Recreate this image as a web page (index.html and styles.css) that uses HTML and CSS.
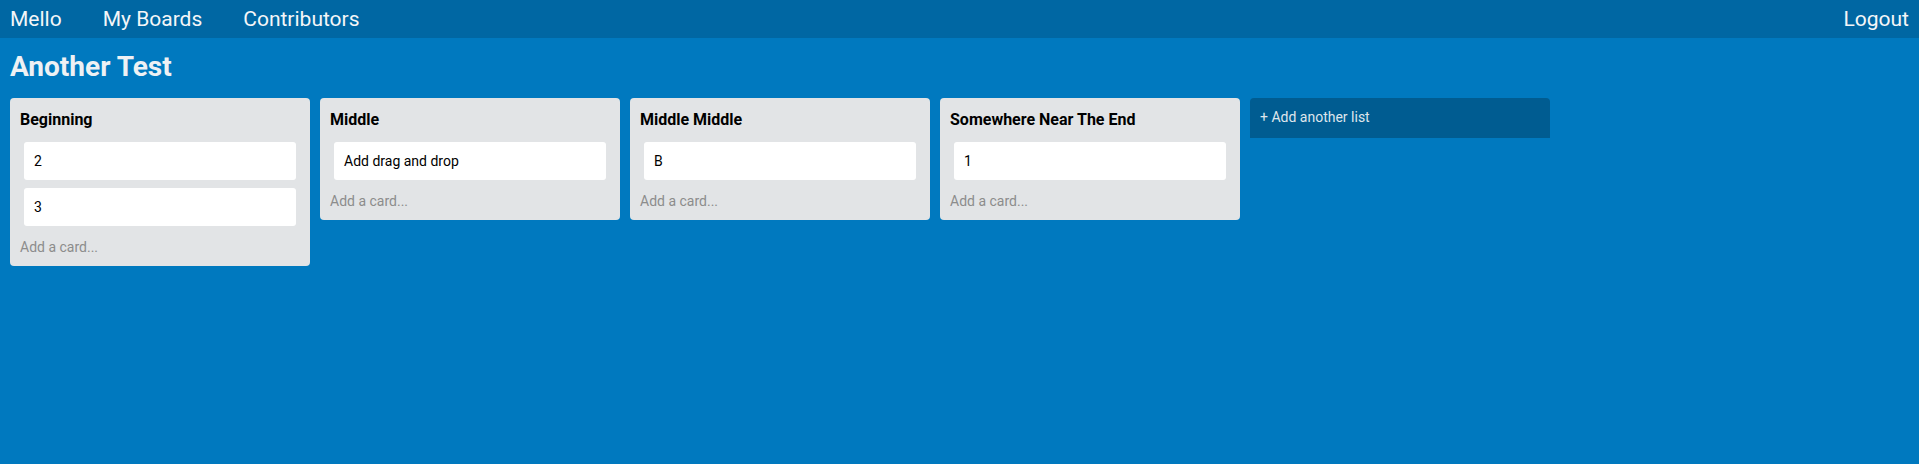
FILE: index.html
```html
<!DOCTYPE html>
<html lang="en">
<head>
<meta charset="utf-8">
<title>Mello</title>
<link rel="stylesheet" href="styles.css">
</head>
<body>
<nav class="topbar">
  <div class="nav-left">
    <a class="nav-link" href="#">Mello</a>
    <a class="nav-link" href="#">My Boards</a>
    <a class="nav-link" href="#">Contributors</a>
  </div>
  <a class="nav-link" href="#">Logout</a>
</nav>
<main class="board">
  <h1 class="board-title">Another Test</h1>
  <div class="lists">
    <section class="list">
      <h3 class="list-title">Beginning</h3>
      <div class="card">2</div>
      <div class="card">3</div>
      <div class="add-card">Add a card...</div>
    </section>
    <section class="list">
      <h3 class="list-title">Middle</h3>
      <div class="card">Add drag and drop</div>
      <div class="add-card">Add a card...</div>
    </section>
    <section class="list">
      <h3 class="list-title">Middle Middle</h3>
      <div class="card">B</div>
      <div class="add-card">Add a card...</div>
    </section>
    <section class="list">
      <h3 class="list-title">Somewhere Near The End</h3>
      <div class="card">1</div>
      <div class="add-card">Add a card...</div>
    </section>
    <div class="add-list">+ Add another list</div>
  </div>
</main>
</body>
</html>
```
FILE: styles.css
```css
* { box-sizing: border-box; }
html, body {
  margin: 0;
  padding: 0;
  height: 100%;
}
body {
  font-family: Roboto, "Liberation Sans", Arial, sans-serif;
  background: #0079bf;
  display: flex;
  flex-direction: column;
}
.topbar {
  height: 38px;
  background: #0067a3;
  display: flex;
  justify-content: space-between;
  align-items: center;
  padding: 0 10px;
}
.nav-left {
  display: flex;
  gap: 41px;
}
.nav-link {
  color: #f4f6f8;
  text-decoration: none;
  font-size: 21px;
  line-height: 38px;
}
.board {
  flex: 1;
  padding: 0 10px;
}
.board-title {
  margin: 12px 0 14px;
  font-size: 28px;
  line-height: 34px;
  font-weight: 700;
  color: #eef1f4;
}
.lists {
  display: flex;
  align-items: flex-start;
  gap: 10px;
}
.list {
  width: 300px;
  background: #e2e4e6;
  border-radius: 4px;
  padding: 12px 10px 10px;
}
.list-title {
  margin: 0 0 12px;
  font-size: 16px;
  line-height: 20px;
  font-weight: 700;
  color: #000;
}
.card {
  margin: 0 4px 8px;
  background: #fff;
  border-radius: 3px;
  padding: 10px;
  font-size: 14px;
  line-height: 18px;
  color: #000;
}
.add-card {
  margin-top: 12px;
  font-size: 14px;
  line-height: 18px;
  color: #8c8c8c;
}
.add-list {
  width: 300px;
  background: #005c91;
  border-radius: 4px 4px 0 0;
  padding: 9px 10px 11px;
  font-size: 14px;
  line-height: 20px;
  color: #dfe6ec;
}
```
